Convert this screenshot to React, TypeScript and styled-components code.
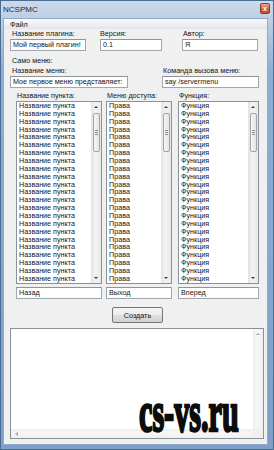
import React from "react";
import styled, { createGlobalStyle } from "styled-components";

const ROWS = 23;

type Dir = "up" | "down" | "left";

function Scroll({ thumb }: { thumb?: boolean }) {
  return (
    <VScroll>
      <ArrowCell>
        <Arrow $dir="up" />
      </ArrowCell>
      {thumb && (
        <Thumb>
          <Grip />
        </Thumb>
      )}
      <Spacer />
      <ArrowCell>
        <Arrow $dir="down" />
      </ArrowCell>
    </VScroll>
  );
}

function Column({
  title,
  item,
  bottom,
  width,
}: {
  title: string;
  item: string;
  bottom: string;
  width: number;
}) {
  return (
    <Field $w={width}>
      <Label $indent={1}>{title}</Label>
      <ListBox>
        <ListItems>
          {Array.from({ length: ROWS }, (_, i) => (
            <Item key={i}>{item}</Item>
          ))}
        </ListItems>
        <Scroll thumb />
      </ListBox>
      <TextBox $mt={3}>{bottom}</TextBox>
    </Field>
  );
}

export default function App() {
  return (
    <>
      <GlobalStyle />
      <Window>
        <TitleBar>
          <Title>NCSPMC</Title>
          <CloseButton>x</CloseButton>
        </TitleBar>
        <Frame>
          <Client>
            <MenuBar>
              <MenuItem>Файл</MenuItem>
            </MenuBar>
            <Body>
              <Row $gaps={[14, 20]}>
                <Field $w={76}>
                  <Label $indent={2}>Название плагина:</Label>
                  <TextBox>Мой первый плагин!</TextBox>
                </Field>
                <Field $w={62}>
                  <Label>Версия:</Label>
                  <TextBox>0.1</TextBox>
                </Field>
                <Field $w={76}>
                  <Label $indent={1}>Автор:</Label>
                  <TextBox>Я</TextBox>
                </Field>
              </Row>
              <SectionLabel>Само меню:</SectionLabel>
              <Row $gaps={[34]} $mt={1}>
                <Field $w={118}>
                  <Label $indent={2}>Название меню:</Label>
                  <TextBox>Мое первое меню представляет:</TextBox>
                </Field>
                <Field $w={97}>
                  <Label $indent={1}>Команда вызова меню:</Label>
                  <TextBox>say /servermenu</TextBox>
                </Field>
              </Row>
              <Columns>
                <Column
                  title="Название пункта:"
                  item="Название пункта"
                  bottom="Назад"
                  width={86}
                />
                <Column
                  title="Меню доступа:"
                  item="Права"
                  bottom="Выход"
                  width={66}
                />
                <Column
                  title="Функция:"
                  item="Функция"
                  bottom="Вперед"
                  width={81}
                />
              </Columns>
              <Button>Создать</Button>
              <Memo>
                <MemoText />
                <MemoVScroll>
                  <ArrowCell>
                    <Arrow $dir="up" $dim />
                  </ArrowCell>
                </MemoVScroll>
                <MemoHScroll>
                  <HArrowCell>
                    <Arrow $dir="left" $dim />
                  </HArrowCell>
                </MemoHScroll>
                <Corner />
                <Watermark>cs-vs.ru</Watermark>
              </Memo>
            </Body>
          </Client>
        </Frame>
      </Window>
    </>
  );
}

const GlobalStyle = createGlobalStyle`
  html, body {
    margin: 0;
    padding: 0;
    background: #ffffff;
  }
  body {
    font-family: "Liberation Sans", Arial, sans-serif;
  }
`;

const Window = styled.div`
  width: 274px;
  height: 450px;
  box-sizing: border-box;
  display: flex;
  flex-direction: column;
  border: 1px solid #4c6d93;
  background: linear-gradient(
    to bottom,
    #cbdaea 0px,
    #bccfe4 18px,
    #8eaed3 70px,
    #7d9fc9 100%
  );
  font-family: "Liberation Sans", Arial, sans-serif;
  font-size: 7.2px;
  color: #161616;
  overflow: hidden;
`;

const TitleBar = styled.div`
  height: 18px;
  flex: none;
  display: flex;
  justify-content: space-between;
  padding: 0 3px 0 2px;
`;

const Title = styled.div`
  margin-top: 4px;
  font-size: 8px;
  line-height: 10px;
  color: #1c2a3a;
`;

const CloseButton = styled.div`
  margin-top: 2px;
  width: 10px;
  height: 11px;
  box-sizing: border-box;
  border: 1px solid #8c3b2c;
  border-radius: 2px;
  background: linear-gradient(to bottom, #eaa38f, #cf6249 55%, #c14a34);
  color: #ffffff;
  font-size: 7px;
  font-weight: bold;
  line-height: 9px;
  text-align: center;
`;

const Frame = styled.div`
  flex: 1;
  display: flex;
  padding: 0 6px 5px 3px;
`;

const Client = styled.div`
  flex: 1;
  display: flex;
  flex-direction: column;
  background: #f0f0f0;
  box-shadow: 0 0 0 1px #93abc8;
`;

const MenuBar = styled.div`
  height: 10px;
  flex: none;
  display: flex;
  align-items: center;
  padding-left: 6px;
  background: linear-gradient(to bottom, #f7f9fc, #e4e9f1);
  border-bottom: 1px solid #e2e6ec;
  box-sizing: border-box;
`;

const MenuItem = styled.span`
  line-height: 9px;
  padding-top: 1px;
`;

const Body = styled.div`
  flex: 1;
  display: flex;
  flex-direction: column;
  padding-left: 6px;
`;

const Row = styled.div<{ $gaps: number[]; $mt?: number }>`
  display: flex;
  margin-top: ${(p) => p.$mt ?? 0}px;
  & > :nth-child(2) {
    margin-left: ${(p) => p.$gaps[0]}px;
  }
  & > :nth-child(3) {
    margin-left: ${(p) => p.$gaps[1] ?? 0}px;
  }
`;

const Field = styled.div<{ $w: number }>`
  width: ${(p) => p.$w}px;
  flex: none;
  display: flex;
  flex-direction: column;
`;

const Label = styled.div<{ $indent?: number }>`
  height: 9px;
  line-height: 9px;
  padding-left: ${(p) => p.$indent ?? 0}px;
  margin-bottom: 1px;
  white-space: nowrap;
`;

const SectionLabel = styled(Label)`
  margin-top: 5px;
  margin-bottom: 0;
  padding-left: 2px;
`;

const TextBox = styled.div<{ $mt?: number }>`
  height: 12px;
  margin-top: ${(p) => p.$mt ?? 0}px;
  box-sizing: border-box;
  border: 1px solid #a2a6ad;
  border-top-color: #8f939a;
  background: #ffffff;
  padding-left: 2px;
  line-height: 10px;
  white-space: nowrap;
  overflow: hidden;
`;

const Columns = styled.div`
  display: flex;
  gap: 4px;
  margin: 3px 0 0 6px;
  & > :nth-child(3) {
    margin-left: 2px;
  }
`;

const ListBox = styled.div`
  height: 183px;
  box-sizing: border-box;
  display: flex;
  border: 1px solid #8c9199;
  background: #ffffff;
  overflow: hidden;
`;

const ListItems = styled.div`
  flex: 1;
  min-width: 0;
  padding-left: 2px;
  overflow: hidden;
`;

const Item = styled.div`
  height: 7.86px;
  line-height: 7.86px;
  white-space: nowrap;
`;

const VScroll = styled.div`
  width: 10px;
  flex: none;
  display: flex;
  flex-direction: column;
  align-items: center;
  background: linear-gradient(to right, #e3e3e3, #f3f3f3 45%, #e9e9e9);
`;

const ArrowCell = styled.div`
  width: 100%;
  height: 10px;
  flex: none;
  display: flex;
  align-items: center;
  justify-content: center;
`;

const Arrow = styled.span<{ $dir: Dir; $dim?: boolean }>`
  width: 0;
  height: 0;
  ${(p) => {
    const c = p.$dim ? "#a9a9a9" : "#3a3a3a";
    if (p.$dir === "left")
      return `border-top: 2px solid transparent; border-bottom: 2px solid transparent; border-right: 3px solid ${c};`;
    if (p.$dir === "up")
      return `border-left: 2px solid transparent; border-right: 2px solid transparent; border-bottom: 2px solid ${c};`;
    return `border-left: 2px solid transparent; border-right: 2px solid transparent; border-top: 2px solid ${c};`;
  }}
`;

const Thumb = styled.div`
  width: 7px;
  height: 39px;
  margin-top: 1px;
  box-sizing: border-box;
  display: flex;
  align-items: center;
  justify-content: center;
  border: 1px solid #a0a4aa;
  border-radius: 2px;
  background: linear-gradient(to right, #f6f6f6, #e4e4e4);
`;

const Grip = styled.div`
  width: 3px;
  height: 5px;
  background: repeating-linear-gradient(
    to bottom,
    #8d8d8d 0px,
    #8d8d8d 1px,
    transparent 1px,
    transparent 2px
  );
`;

const Spacer = styled.div`
  flex: 1;
`;

const Button = styled.button`
  align-self: center;
  width: 51px;
  height: 16px;
  margin-top: 8px;
  margin-right: 2px;
  padding: 0;
  box-sizing: border-box;
  border: 1px solid #767676;
  border-radius: 2px;
  background: linear-gradient(
    to bottom,
    #f4f4f4 0%,
    #ececec 48%,
    #dedede 52%,
    #d2d2d2 100%
  );
  font-family: inherit;
  font-size: 7.2px;
  color: #161616;
`;

const Memo = styled.div`
  position: relative;
  width: 254px;
  height: 111px;
  margin-top: 5px;
  box-sizing: border-box;
  display: grid;
  grid-template-columns: 1fr 10px;
  grid-template-rows: 1fr 9px;
  border: 1px solid #8c9199;
  background: #ffffff;
`;

const MemoText = styled.div``;

const MemoVScroll = styled.div`
  display: flex;
  flex-direction: column;
  background: linear-gradient(to right, #ededed, #f7f7f7 45%, #efefef);
`;

const MemoHScroll = styled.div`
  display: flex;
  background: linear-gradient(to bottom, #ededed, #f7f7f7 45%, #efefef);
`;

const HArrowCell = styled.div`
  width: 10px;
  display: flex;
  align-items: center;
  justify-content: center;
`;

const Corner = styled.div`
  background: #f0f0f0;
`;

const Watermark = styled.span`
  position: absolute;
  left: 128px;
  top: 53px;
  font-family: "Liberation Serif", "Times New Roman", serif;
  font-weight: 900;
  font-size: 58px;
  line-height: 59px;
  color: #0c0c0c;
  -webkit-text-stroke: 2.6px #0c0c0c;
  transform: scaleX(0.52);
  transform-origin: left top;
  white-space: nowrap;
`;
